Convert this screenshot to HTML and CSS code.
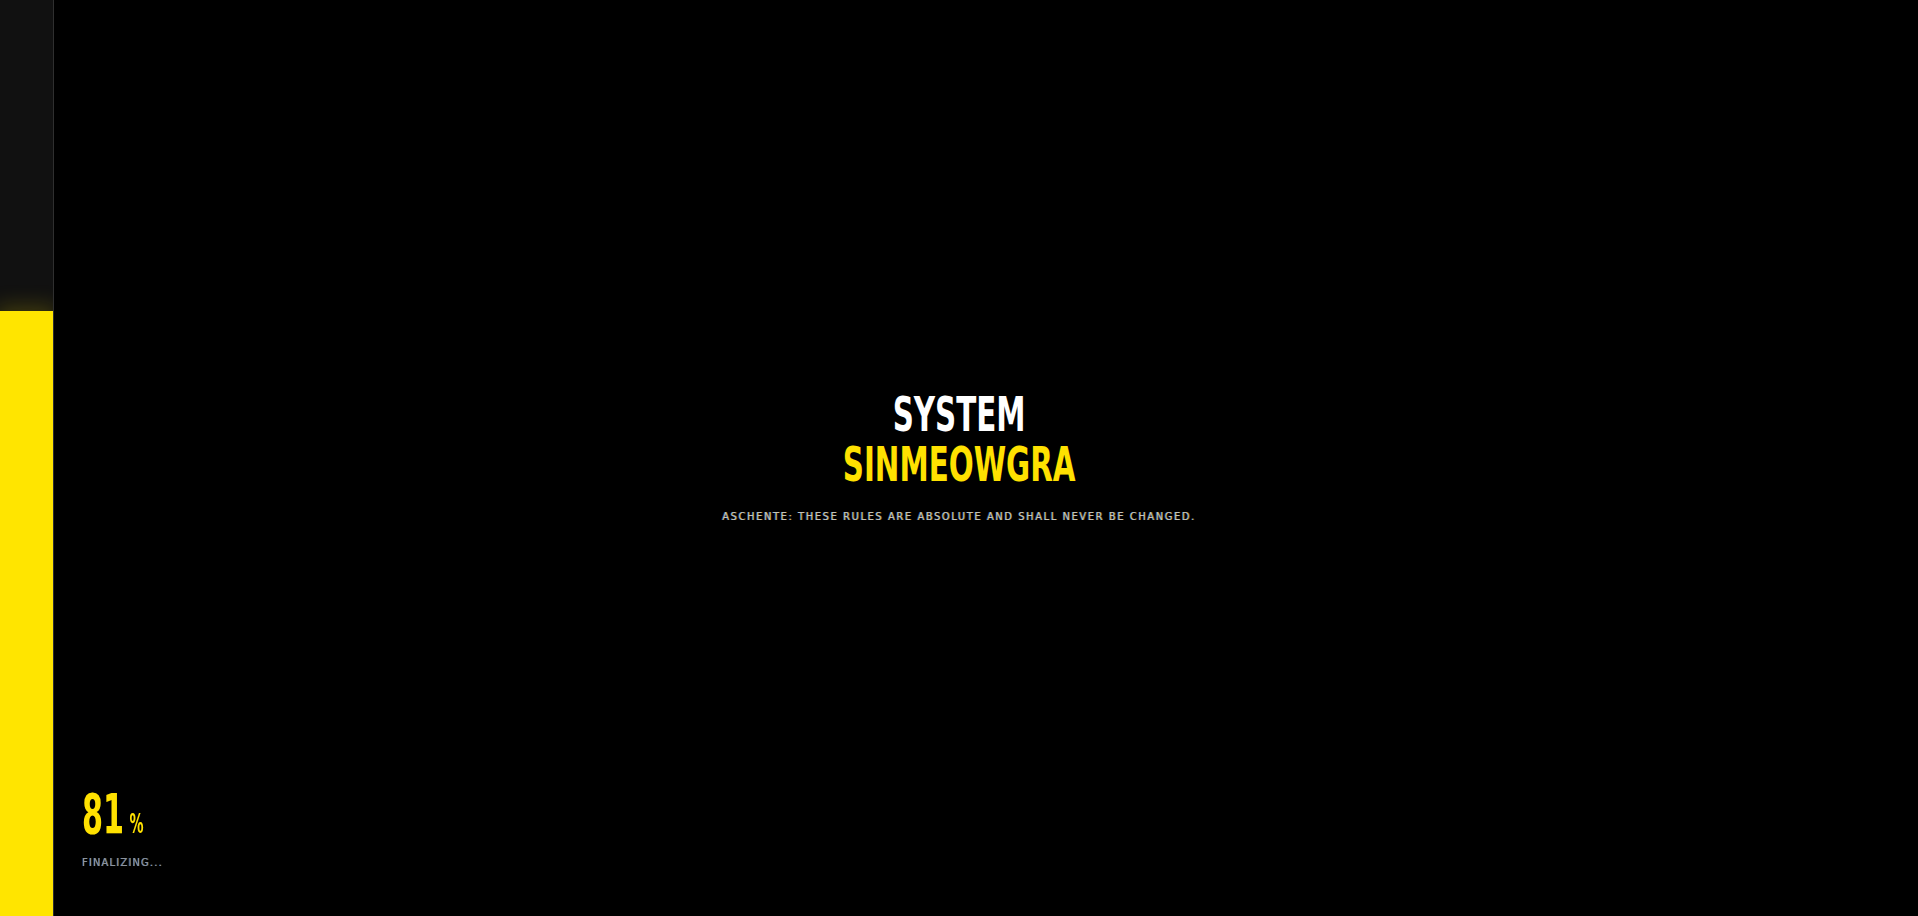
FILE: index.html
```html
<!DOCTYPE html>
<html lang="en">
<head>
<meta charset="utf-8">
<title>System Sinmeowgra</title>
<link rel="stylesheet" href="styles.css">
</head>
<body>
<aside class="rail">
  <div class="rail-fill" style="height: 605px"></div>
</aside>
<main class="stage">
  <div class="hero">
    <h1 class="title">
      <span class="title-line">SYSTEM</span>
      <span class="title-line accent">SINMEOWGRA</span>
    </h1>
    <p class="subtitle">ASCHENTE: THESE RULES ARE ABSOLUTE AND SHALL NEVER BE CHANGED.</p>
  </div>
</main>
<div class="loader">
  <div class="percent"><span class="num">81</span><span class="sign">%</span></div>
  <div class="status">FINALIZING...</div>
</div>
</body>
</html>
```

FILE: styles.css
```css
html, body {
  margin: 0;
  padding: 0;
  height: 100%;
  background: #000;
  overflow: hidden;
}

body {
  font-family: "DejaVu Sans Condensed", "Liberation Sans", sans-serif;
}

.rail {
  position: fixed;
  left: 0;
  top: 0;
  width: 53px;
  height: 100vh;
  background: #111111;
  border-right: 1px solid #2f2f2f;
  overflow: hidden;
}

.rail-fill {
  position: absolute;
  left: 0;
  bottom: 0;
  width: 100%;
  background: #ffe500;
  box-shadow: 0 0 22px 4px rgba(255, 229, 0, 0.22);
}

.stage {
  height: 100vh;
  display: flex;
  align-items: center;
  justify-content: center;
  padding-bottom: 6px;
  box-sizing: border-box;
}

.hero {
  display: flex;
  flex-direction: column;
  align-items: center;
}

.title {
  margin: 0;
  display: flex;
  flex-direction: column;
  align-items: center;
  font-size: 48px;
  line-height: 50px;
  font-weight: 700;
  color: #ffffff;
  transform: scaleX(0.68);
}

.title-line {
  display: block;
}

.accent {
  color: #ffe100;
}

.subtitle {
  margin: 22px 0 0;
  font-size: 11px;
  line-height: 1;
  letter-spacing: 1.6px;
  color: #c4c2bc;
  text-shadow: -0.6px 0 rgba(80, 150, 255, 0.55), 0.6px 0 rgba(255, 210, 60, 0.5);
}

.loader {
  position: fixed;
  left: 82px;
  bottom: 48px;
}

.percent {
  display: flex;
  align-items: baseline;
  line-height: 1;
  color: #ffe100;
  font-weight: 700;
  transform: scaleX(0.6);
  transform-origin: left center;
}

.num {
  font-size: 56px;
}

.sign {
  font-size: 26px;
  margin-left: 9px;
}

.status {
  margin-top: 15px;
  font-size: 11px;
  line-height: 1;
  letter-spacing: 1.2px;
  color: #8c939b;
  text-shadow: -0.6px 0 rgba(60, 140, 255, 0.6), 0.6px 0 rgba(255, 200, 80, 0.35);
}
```
